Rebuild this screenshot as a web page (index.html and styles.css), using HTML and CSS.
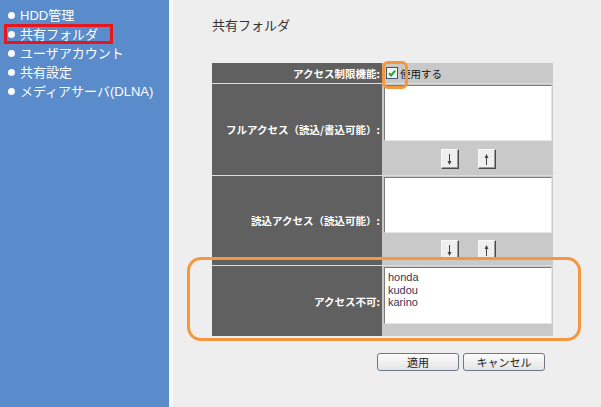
FILE: index.html
```html
<!DOCTYPE html>
<html lang="ja">
<head>
  <meta charset="UTF-8">
  <title>共有フォルダ</title>
  <link rel="stylesheet" href="styles.css">
</head>
<body>
  <div class="page">
    <nav class="side">
      <ul class="menu">
        <li>HDD管理</li>
        <li class="current">共有フォルダ</li>
        <li>ユーザアカウント</li>
        <li>共有設定</li>
        <li>メディアサーバ(DLNA)</li>
      </ul>
    </nav>
    <main class="main">
      <h1>共有フォルダ</h1>
      <div class="form">
        <div class="grid">
          <div class="label">アクセス制限機能:</div>
          <div class="field check-field">
            <svg class="checkbox" width="12" height="12" viewBox="0 0 12 12">
              <rect x="0.5" y="0.5" width="11" height="11" fill="#f2f4f2" stroke="#3d5570"/>
              <path d="M3 6.2 L5.1 8.4 L9.2 3.6" fill="none" stroke="#28a03a" stroke-width="2"/>
            </svg>
            <span>使用する</span>
          </div>

          <div class="label">フルアクセス（読込/書込可能）:</div>
          <div class="field list-field">
            <textarea class="list" readonly></textarea>
            <div class="arrows">
              <button class="arrow" type="button">
                <svg width="9" height="13" viewBox="0 0 9 13"><path d="M4.5 1 V9" stroke="#444" stroke-width="1"/><path d="M2.5 8 L4.5 12 L6.5 8 Z" fill="#444"/></svg>
              </button>
              <button class="arrow" type="button">
                <svg width="9" height="13" viewBox="0 0 9 13"><path d="M4.5 4 V12" stroke="#444" stroke-width="1"/><path d="M2.5 5 L4.5 1 L6.5 5 Z" fill="#444"/></svg>
              </button>
            </div>
          </div>

          <div class="label">読込アクセス（読込可能）:</div>
          <div class="field list-field">
            <textarea class="list" readonly></textarea>
            <div class="arrows">
              <button class="arrow" type="button">
                <svg width="9" height="13" viewBox="0 0 9 13"><path d="M4.5 1 V9" stroke="#444" stroke-width="1"/><path d="M2.5 8 L4.5 12 L6.5 8 Z" fill="#444"/></svg>
              </button>
              <button class="arrow" type="button">
                <svg width="9" height="13" viewBox="0 0 9 13"><path d="M4.5 4 V12" stroke="#444" stroke-width="1"/><path d="M2.5 5 L4.5 1 L6.5 5 Z" fill="#444"/></svg>
              </button>
            </div>
          </div>

          <div class="label">アクセス不可:</div>
          <div class="field list-field">
            <textarea class="list deny" readonly>honda
kudou
karino</textarea>
          </div>
        </div>

        <div class="mark mark-check"></div>
        <div class="mark mark-deny"></div>

        <div class="actions">
          <button class="btn" type="button">適用</button>
          <button class="btn" type="button">キャンセル</button>
        </div>
      </div>
    </main>
  </div>
</body>
</html>
```

FILE: styles.css
```css
body {
  margin: 0;
  font-family: "Liberation Sans", "Noto Sans CJK JP", sans-serif;
  background: #eeeeee;
}
.page {
  display: flex;
  height: 407px;
}
.side {
  width: 169px;
  background: #5a8bca;
}
.menu {
  list-style: none;
  margin: 0;
  padding: 6px 0 0 0;
}
.menu li {
  position: relative;
  padding-left: 20px;
  font-size: 13px;
  line-height: 19px;
  color: #fff;
}
.menu li::before {
  content: "";
  position: absolute;
  left: 8px;
  top: 6px;
  width: 7px;
  height: 7px;
  border-radius: 50%;
  background: radial-gradient(circle at 40% 35%, #fff 55%, #c9d3e2);
}
.menu li.current::after {
  content: "";
  position: absolute;
  left: 4px;
  top: -1px;
  width: 109px;
  height: 20px;
  border: 3px solid #e8151b;
  box-sizing: border-box;
}
.main {
  flex: 1;
  border-left: 4px solid #f7f7f7;
  padding: 16px 0 0 39px;
}
h1 {
  margin: 0 0 28px 0;
  font-size: 13px;
  line-height: 19px;
  font-weight: normal;
  color: #333;
}
.form {
  position: relative;
  width: 341px;
}
.grid {
  display: grid;
  grid-template-columns: 170px 171px;
  grid-template-rows: 20px 91px 89px 70px;
  row-gap: 1px;
  background: #dcdcdc;
}
.label {
  display: flex;
  align-items: center;
  justify-content: flex-end;
  padding-right: 2px;
  background: #606060;
  color: #fff;
  font-family: "Noto Sans CJK JP", sans-serif;
  font-size: 10.5px;
  font-weight: bold;
  white-space: nowrap;
}
.field {
  background: #c9c9c9;
}
.check-field {
  display: flex;
  align-items: center;
  gap: 2px;
  padding-left: 4px;
  font-family: "Noto Sans CJK JP", sans-serif;
  font-size: 10.5px;
  color: #111;
}
.list-field {
  display: flex;
  flex-direction: column;
  padding: 1px 1px 0 2px;
}
.list {
  display: block;
  width: 100%;
  height: 56px;
  box-sizing: border-box;
  margin: 0;
  padding: 3px 3px;
  border: 1px solid;
  border-color: #7a7a7a #e6e6e6 #e6e6e6 #7a7a7a;
  background: #fff;
  resize: none;
  overflow: hidden;
  font-family: "Liberation Sans", sans-serif;
  font-size: 11px;
  line-height: 12.7px;
  color: #3d3550;
}
.deny {
  height: 57px;
}
.arrows {
  flex: 1;
  display: flex;
  justify-content: center;
  align-items: center;
  gap: 19px;
  padding-top: 2px;
}
.arrow {
  width: 18px;
  height: 20px;
  padding: 0;
  display: flex;
  align-items: center;
  justify-content: center;
  background: #efefef;
  border: 1px solid;
  border-color: #fafafa #4a4a4a #4a4a4a #fafafa;
  box-shadow: inset -1px -1px #9a9a9a;
}
.mark {
  position: absolute;
  border: 3px solid #f5973f;
  box-sizing: border-box;
}
.mark-check {
  left: 170px;
  top: -2px;
  width: 26px;
  height: 28px;
  border-radius: 6px;
}
.mark-deny {
  left: -25px;
  top: 194px;
  width: 394px;
  height: 84px;
  border-radius: 14px;
}
.actions {
  display: flex;
  justify-content: flex-end;
  gap: 4px;
  padding-right: 8px;
  margin-top: 17px;
}
.btn {
  width: 82px;
  height: 18px;
  padding: 0;
  border: 1px solid #6a7889;
  border-radius: 3px;
  background: linear-gradient(#fdfdfd, #e4e4e4);
  font-family: "Noto Sans CJK JP", sans-serif;
  font-size: 11px;
  line-height: 16px;
  color: #222;
}
```
